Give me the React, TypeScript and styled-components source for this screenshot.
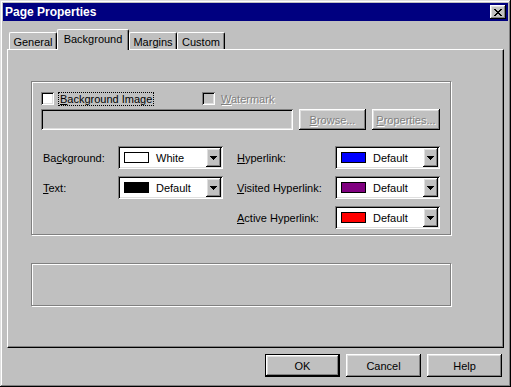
import React from 'react';
import styled, { createGlobalStyle, css } from 'styled-components';

const GlobalStyle = createGlobalStyle`
  * { box-sizing: border-box; }
  html, body { margin: 0; padding: 0; background: #c0c0c0; }
  body {
    font-family: "Liberation Sans", Arial, sans-serif;
    font-size: 11px;
    color: #000;
  }
`;

const raised = css`
  box-shadow: inset -1px -1px #000, inset 1px 1px #fff, inset -2px -2px #808080, inset 2px 2px #dfdfdf;
`;

const sunken = css`
  box-shadow: inset 1px 1px #808080, inset -1px -1px #fff, inset 2px 2px #000, inset -2px -2px #dfdfdf;
`;

// Window frame
const Window = styled.div`
  width: 511px;
  height: 387px;
  background: #c0c0c0;
  padding: 3px;
  display: flex;
  flex-direction: column;
  box-shadow: inset -1px -1px #000, inset 1px 1px #dfdfdf, inset -2px -2px #808080, inset 2px 2px #fff;
`;

const TitleBar = styled.div`
  height: 18px;
  background: #000080;
  color: #fff;
  display: flex;
  align-items: center;
  justify-content: space-between;
  padding: 0 2px 0 2px;
`;

const Title = styled.span`
  font-weight: bold;
  font-size: 12px;
`;

const CloseButton = styled.div`
  width: 16px;
  height: 14px;
  background: #c0c0c0;
  display: flex;
  align-items: center;
  justify-content: center;
  ${raised}
`;

const Body = styled.div`
  flex: 1;
  display: flex;
  flex-direction: column;
  padding: 8px 4px 0 4px;
`;

const TabStrip = styled.div`
  display: flex;
  align-items: flex-end;
  height: 20px;
  padding-left: 2px;
  position: relative;
  z-index: 1;
`;

const Tab = styled.div<{ $active?: boolean; $w: number }>`
  width: ${p => p.$w}px;
  height: ${p => (p.$active ? 21 : 17)}px;
  margin-bottom: ${p => (p.$active ? -1 : 0)}px;
  background: #c0c0c0;
  border-top: 1px solid #fff;
  border-left: 1px solid #fff;
  border-right: 1px solid #000;
  border-radius: 2px 2px 0 0;
  box-shadow: inset -1px 0 #808080;
  display: flex;
  align-items: ${p => (p.$active ? 'flex-start' : 'center')};
  padding-top: ${p => (p.$active ? 3 : 1)}px;
  justify-content: center;
  font-size: 11px;
`;

const Panel = styled.div`
  height: 299px;
  border-top: 1px solid #fff;
  border-left: 1px solid #fff;
  border-right: 1px solid #000;
  border-bottom: 1px solid #000;
  box-shadow: inset -1px -1px #808080;
  padding: 31px 0 0 23px;
  display: flex;
  flex-direction: column;
`;

const GroupBox = styled.div<{ $h: number }>`
  width: 420px;
  height: ${p => p.$h}px;
  border: 1px solid #808080;
  box-shadow: inset 1px 1px #fff, 1px 1px #fff;
  padding: 10px 0 0 9px;
  display: flex;
  flex-direction: column;
  & + & { margin-top: 28px; }
`;

const CheckRow = styled.div`
  display: flex;
  align-items: center;
  height: 13px;
`;

const CheckItem = styled.label<{ $w?: number }>`
  display: flex;
  align-items: center;
  gap: 5px;
  width: ${p => (p.$w ? `${p.$w}px` : 'auto')};
`;

const CheckBox = styled.span<{ $disabled?: boolean }>`
  width: 13px;
  height: 13px;
  background: ${p => (p.$disabled ? '#c0c0c0' : '#fff')};
  ${sunken}
`;

const Label = styled.span<{ $disabled?: boolean; $focus?: boolean }>`
  font-size: 11px;
  line-height: 12px;
  padding: 0 1px;
  white-space: nowrap;
  ${p => p.$disabled && css`
    color: #808080;
    text-shadow: 1px 1px #fff;
  `}
  ${p => p.$focus && css`
    outline: 1px dotted #000;
    outline-offset: 0;
  `}
`;

const InputRow = styled.div`
  display: flex;
  margin-top: 4px;
  height: 21px;
  gap: 6px;
`;

const TextBox = styled.div`
  width: 252px;
  height: 21px;
  background: #c0c0c0;
  ${sunken}
`;

const PushButton = styled.div<{ $w: number; $h?: number; $disabled?: boolean; $default?: boolean }>`
  width: ${p => p.$w}px;
  height: ${p => p.$h ?? 21}px;
  background: #c0c0c0;
  display: flex;
  align-items: center;
  justify-content: center;
  font-size: 11px;
  ${raised}
  ${p => p.$disabled && css`
    color: #808080;
    text-shadow: 1px 1px #fff;
  `}
  ${p => p.$default && css`
    box-shadow: inset 0 0 0 1px #000, inset -2px -2px #000, inset 2px 2px #fff, inset -3px -3px #808080, inset 3px 3px #dfdfdf;
  `}
`;

const ColorGrid = styled.div`
  display: grid;
  grid-template-columns: 76px 105px 112px 105px;
  row-gap: 7px;
  margin-top: 16px;
  align-items: center;
  margin-left: 1px;
`;

const GridLabel = styled.span<{ $col: number; $row: number }>`
  grid-column: ${p => p.$col};
  grid-row: ${p => p.$row};
  font-size: 11px;
  white-space: nowrap;
  padding-left: ${p => (p.$col === 3 ? 14 : 1)}px;
`;

const Combo = styled.div<{ $col: number; $row: number }>`
  grid-column: ${p => p.$col};
  grid-row: ${p => p.$row};
  height: 23px;
  background: #fff;
  padding: 2px;
  display: flex;
  align-items: center;
  ${sunken}
`;

const Swatch = styled.span<{ $color: string }>`
  width: 25px;
  height: 11px;
  margin-left: 4px;
  background: ${p => p.$color};
  border: 1px solid #000;
`;

const ComboText = styled.span`
  flex: 1;
  margin-left: 7px;
  font-size: 11px;
`;

const DropButton = styled.span`
  width: 15px;
  height: 19px;
  background: #c0c0c0;
  display: flex;
  align-items: center;
  justify-content: center;
  ${raised}
`;

const Footer = styled.div`
  display: flex;
  justify-content: flex-end;
  gap: 6px;
  margin-top: 6px;
  padding-right: 2px;
`;

const Arrow = () => (
  <svg width="7" height="4" viewBox="0 0 7 4">
    <path d="M0 0h7v1h-1v1h-1v1h-1v1h-1v-1h-1v-1h-1v-1h-1z" fill="#000" />
  </svg>
);

const CloseGlyph = () => (
  <svg width="8" height="7" viewBox="0 0 8 7" shapeRendering="crispEdges">
    <path d="M0 0h2v1h1v1h2v-1h1v-1h2v1h-1v1h-1v1h-1v1h1v1h1v1h1v1h-2v-1h-1v-1h-2v1h-1v1h-2v-1h1v-1h1v-1h1v-1h-1v-1h-1v-1h-1z" fill="#000" />
  </svg>
);

const colorRows = [
  { col: 1, row: 1, label: <>Ba<u>c</u>kground:</>, color: '#fff', text: 'White' },
  { col: 1, row: 2, label: <><u>T</u>ext:</>, color: '#000', text: 'Default' },
  { col: 3, row: 1, label: <><u>H</u>yperlink:</>, color: '#0000ff', text: 'Default' },
  { col: 3, row: 2, label: <><u>V</u>isited Hyperlink:</>, color: '#800080', text: 'Default' },
  { col: 3, row: 3, label: <><u>A</u>ctive Hyperlink:</>, color: '#ff0000', text: 'Default' },
];

const tabs = [
  { name: 'General', w: 48 },
  { name: 'Background', w: 72, active: true },
  { name: 'Margins', w: 48 },
  { name: 'Custom', w: 48 },
];

export default function App() {
  return (
    <>
      <GlobalStyle />
      <Window>
        <TitleBar>
          <Title>Page Properties</Title>
          <CloseButton><CloseGlyph /></CloseButton>
        </TitleBar>
        <Body>
          <TabStrip>
            {tabs.map(t => (
              <Tab key={t.name} $w={t.w} $active={t.active}>{t.name}</Tab>
            ))}
          </TabStrip>
          <Panel>
            <GroupBox $h={154}>
              <CheckRow>
                <CheckItem $w={161}>
                  <CheckBox />
                  <Label $focus><u>B</u>ackground Image</Label>
                </CheckItem>
                <CheckItem>
                  <CheckBox $disabled />
                  <Label $disabled><u>W</u>atermark</Label>
                </CheckItem>
              </CheckRow>
              <InputRow>
                <TextBox />
                <PushButton $w={67} $disabled><u>B</u>rowse...</PushButton>
                <PushButton $w={68} $disabled><u>P</u>roperties...</PushButton>
              </InputRow>
              <ColorGrid>
                {colorRows.map((r, i) => (
                  <React.Fragment key={i}>
                    <GridLabel $col={r.col} $row={r.row}>{r.label}</GridLabel>
                    <Combo $col={r.col + 1} $row={r.row}>
                      <Swatch $color={r.color} />
                      <ComboText>{r.text}</ComboText>
                      <DropButton><Arrow /></DropButton>
                    </Combo>
                  </React.Fragment>
                ))}
              </ColorGrid>
            </GroupBox>
            <GroupBox $h={43} />
          </Panel>
          <Footer>
            <PushButton $w={75} $h={23} $default>OK</PushButton>
            <PushButton $w={75} $h={23}>Cancel</PushButton>
            <PushButton $w={75} $h={23}>Help</PushButton>
          </Footer>
        </Body>
      </Window>
    </>
  );
}
